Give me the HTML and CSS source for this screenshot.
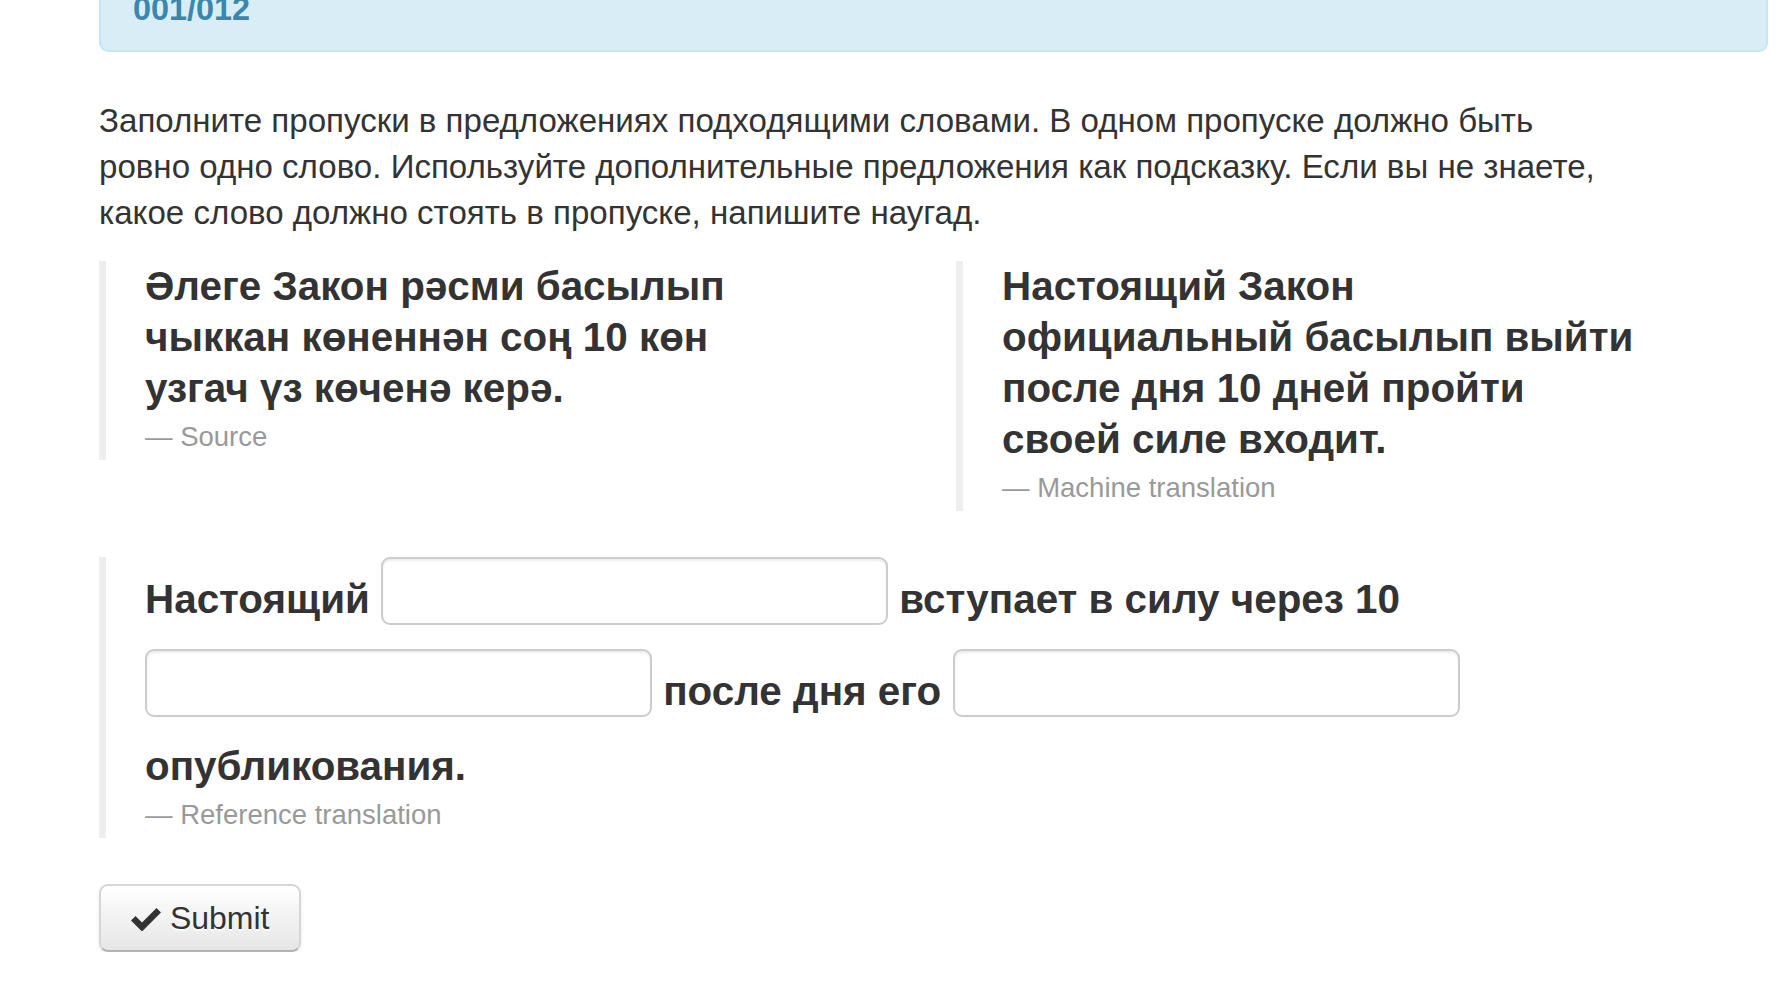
FILE: index.html
```html
<!DOCTYPE html>
<html lang="ru">
<head>
<meta charset="utf-8">
<title>Fill in the gaps</title>
<link rel="stylesheet" href="styles.css">
</head>
<body>
<div class="container">
  <div class="alert"><strong>001/012</strong></div>

  <p class="instructions">Заполните пропуски в предложениях подходящими словами. В одном пропуске должно быть<br>ровно одно слово. Используйте дополнительные предложения как подсказку. Если вы не знаете,<br>какое слово должно стоять в пропуске, напишите наугад.</p>

  <div class="quotes">
    <blockquote class="quote">
      <p>Әлеге Закон рәсми басылып<br>чыккан көненнән соң 10 көн<br>узгач үз көченә керә.</p>
      <small>— Source</small>
    </blockquote>
    <blockquote class="quote">
      <p>Настоящий Закон<br>официальный басылып выйти<br>после дня 10 дней пройти<br>своей силе входит.</p>
      <small>— Machine translation</small>
    </blockquote>
  </div>

  <form class="gap-form">
    <blockquote class="quote reference">
      <p>Настоящий <input type="text" class="gap"> вступает в силу через 10 <input type="text" class="gap"> после дня его <input type="text" class="gap"> опубликования.</p>
      <small>— Reference translation</small>
    </blockquote>

    <button type="button" class="btn"><svg class="icon-ok" viewBox="0 0 30 24" width="30" height="24" aria-hidden="true"><path d="M0 13.5 L4.5 9 L11 15.5 L25.5 1 L30 5.5 L11 24.5 Z" fill="#333"/></svg> Submit</button>
  </form>
</div>
</body>
</html>
```

FILE: styles.css
```css
html, body {
  margin: 0;
  padding: 0;
  background: #fff;
}

body {
  font-family: "Liberation Sans", Helvetica, Arial, "DejaVu Sans", sans-serif;
  font-size: 32.4px;
  line-height: 46px;
  color: #333;
}

.container {
  margin-left: 99px;
  width: 1669px;
}

.alert {
  margin-top: -34px;
  margin-bottom: 46px;
  padding: 18px 80px 18px 32px;
  background: #d9edf7;
  border: 2px solid #c6e6f0;
  border-radius: 9px;
  color: #3a87ad;
}

.instructions {
  margin: 0 0 25px;
  max-width: 1640px;
  font-size: 33.1px;
}

.quotes {
  display: grid;
  grid-template-columns: 1fr 1fr;
  column-gap: 45px;
  align-items: start;
  margin-bottom: 46px;
}

.quote {
  margin: 0;
  padding: 0 0 0 39px;
  border-left: 7px solid #eee;
}

.quote p {
  margin: 0;
  font-size: 40.4px;
  font-weight: bold;
  line-height: 51px;
  color: #333;
}

.quote small {
  display: block;
  font-size: 27.5px;
  line-height: 46px;
  color: #999;
}

.gap-form {
  margin: 0;
}

.reference {
  margin-bottom: 46px;
}

.reference p {
  max-width: 1400px;
}

.gap {
  display: inline-block;
  box-sizing: border-box;
  width: 507px;
  height: 68px;
  margin: 0 0 24px;
  padding: 9px 14px;
  vertical-align: 11px;
  font: 32px/46px "Liberation Sans", Helvetica, Arial, sans-serif;
  color: #555;
  background: #fff;
  border: 2px solid #ccc;
  border-radius: 9px;
  box-shadow: inset 0 2px 2px rgba(0, 0, 0, 0.075);
}

.btn {
  display: inline-block;
  margin: 0;
  padding: 9px 30px;
  font: 32px/46px "Liberation Sans", Helvetica, Arial, sans-serif;
  color: #333;
  text-shadow: 0 2px 2px rgba(255, 255, 255, 0.75);
  background-color: #f5f5f5;
  background-image: linear-gradient(to bottom, #ffffff, #e6e6e6);
  border: 2px solid #d6d6d6;
  border-bottom-color: #b3b3b3;
  border-radius: 9px;
  box-shadow: inset 0 2px 0 rgba(255, 255, 255, 0.2), 0 2px 4px rgba(0, 0, 0, 0.08);
  cursor: pointer;
}

.icon-ok {
  vertical-align: -2px;
}
```
